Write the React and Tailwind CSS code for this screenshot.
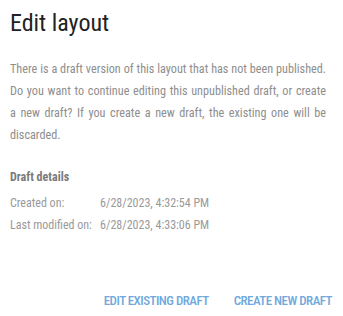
export default function App() {
  const font = { fontFamily: '"Roboto Condensed", Roboto, "Liberation Sans", sans-serif' };
  return (
    <div
      className="w-[343px] h-[316px] bg-white overflow-hidden flex flex-col pl-[10px] pr-[17px]"
      style={font}
    >
      <h1 className="pt-[7px] text-[24px] leading-[32px] font-normal text-[#222]">Edit layout</h1>
      <p className="mt-[19px] text-[12.2px] leading-[22px] text-[#8e8e8e] text-justify">
        {"There is a draft version of this layout that has not been published. Do you want to continue editing this unpublished draft, or create a\u00a0new draft? If you create a new draft, the existing one will be discarded."}
      </p>
      <div className="mt-[20px] text-[12px] leading-[22px] font-bold text-[#7a7a7a]">Draft details</div>
      <div className="mt-[4px] grid grid-cols-[90px_1fr] text-[12px] leading-[22px] text-[#9a9a9a]">
        <div>Created on:</div>
        <div>6/28/2023, 4:32:54 PM</div>
        <div>Last modified on:</div>
        <div>6/28/2023, 4:33:06 PM</div>
      </div>
      <div className="mt-auto mb-[4px] flex justify-end gap-[25px] -mr-[6px] text-[13px] leading-[22px] tracking-[-0.04em] font-medium text-[#6fa8dc]">
        <button className="uppercase">Edit existing draft</button>
        <button className="uppercase">Create new draft</button>
      </div>
    </div>
  );
}
